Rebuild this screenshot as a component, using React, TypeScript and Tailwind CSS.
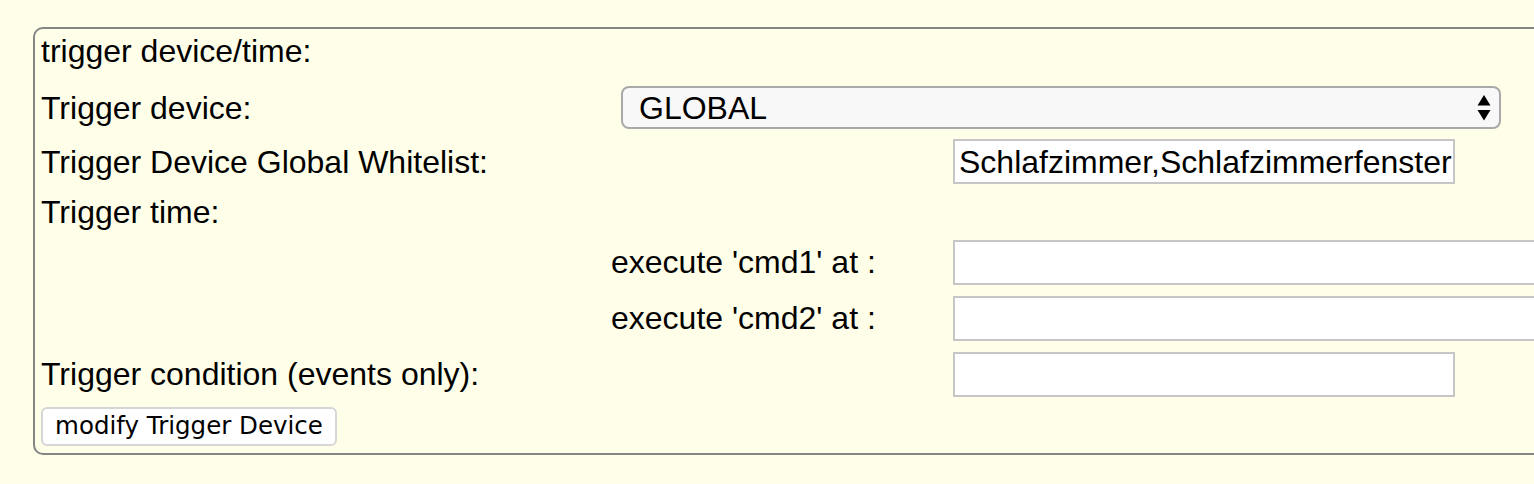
import { useState } from "react";

const labelCls = "text-[32px] leading-none text-black whitespace-nowrap";
const inputCls =
  "h-[45px] border-2 border-[#c6c6c6] bg-white pl-[4px] pr-0 text-[32px] text-black outline-none font-['Liberation_Sans',Arial,sans-serif]";

const App = () => {
  const [whitelist, setWhitelist] = useState("Schlafzimmer,Schlafzimmerfenster");
  const [cmd1, setCmd1] = useState("");
  const [cmd2, setCmd2] = useState("");
  const [condition, setCondition] = useState("");

  return (
    <div className="w-full h-[484px] overflow-hidden bg-[#ffffe9] font-['Liberation_Sans',Arial,sans-serif]">
      {/* Trigger panel, runs past the right edge */}
      <div className="ml-[33px] mt-[27px] w-[1600px] border-2 border-[#858585] rounded-[10px] pl-[6px] pb-[2px]">
        <div className="grid grid-cols-[570px_342px_640px]">
          {/* title */}
          <div className="col-span-3 h-[44px] flex items-center">
            <span className={labelCls}>trigger device/time:</span>
          </div>

          {/* device select */}
          <div className="h-[53px] mt-[8px] flex items-center">
            <span className={labelCls}>Trigger device:</span>
          </div>
          <div className="col-span-2 h-[53px] mt-[8px] flex items-center pl-[10px]">
            <div className="relative w-[880px] h-[43px] rounded-[8px] border-2 border-[#a9a9a9] bg-[#f8f8f8] flex items-center pl-[16px]">
              <span className="text-[32px] leading-none text-black">GLOBAL</span>
              <svg
                className="absolute right-[8px] top-[5px]"
                width="14"
                height="30"
                viewBox="0 0 14 30"
              >
                <polygon points="7,2 13.5,12.5 0.5,12.5" fill="#000" />
                <polygon points="0.5,17 13.5,17 7,27.5" fill="#000" />
              </svg>
            </div>
          </div>

          {/* whitelist */}
          <div className="col-span-2 h-[55px] flex items-center">
            <span className={labelCls}>Trigger Device Global Whitelist:</span>
          </div>
          <div className="h-[55px] flex items-center">
            <input
              className={`${inputCls} w-[502px]`}
              value={whitelist}
              onChange={(e) => setWhitelist(e.target.value)}
            />
          </div>

          {/* time */}
          <div className="col-span-3 h-[45px] flex items-center">
            <span className={labelCls}>Trigger time:</span>
          </div>

          <div className="h-[56px]" />
          <div className="h-[56px] flex items-center">
            <span className={labelCls}>execute 'cmd1' at :</span>
          </div>
          <div className="h-[56px] flex items-center">
            <input
              className={`${inputCls} w-[640px]`}
              value={cmd1}
              onChange={(e) => setCmd1(e.target.value)}
            />
          </div>

          <div className="h-[56px]" />
          <div className="h-[56px] flex items-center">
            <span className={labelCls}>execute 'cmd2' at :</span>
          </div>
          <div className="h-[56px] flex items-center">
            <input
              className={`${inputCls} w-[640px]`}
              value={cmd2}
              onChange={(e) => setCmd2(e.target.value)}
            />
          </div>

          {/* condition */}
          <div className="col-span-2 h-[56px] flex items-center">
            <span className={labelCls}>Trigger condition (events only):</span>
          </div>
          <div className="h-[56px] flex items-center">
            <input
              className={`${inputCls} w-[502px]`}
              value={condition}
              onChange={(e) => setCondition(e.target.value)}
            />
          </div>

          {/* submit */}
          <div className="col-span-3 h-[49px] flex items-center">
            <button className="h-[39px] w-[296px] rounded-[6px] border-2 border-[#d6d6d6] bg-white text-[24.5px] text-black font-['DejaVu_Sans',sans-serif] flex items-center justify-center">
              modify Trigger Device
            </button>
          </div>
        </div>
      </div>
    </div>
  );
};

export default App;
